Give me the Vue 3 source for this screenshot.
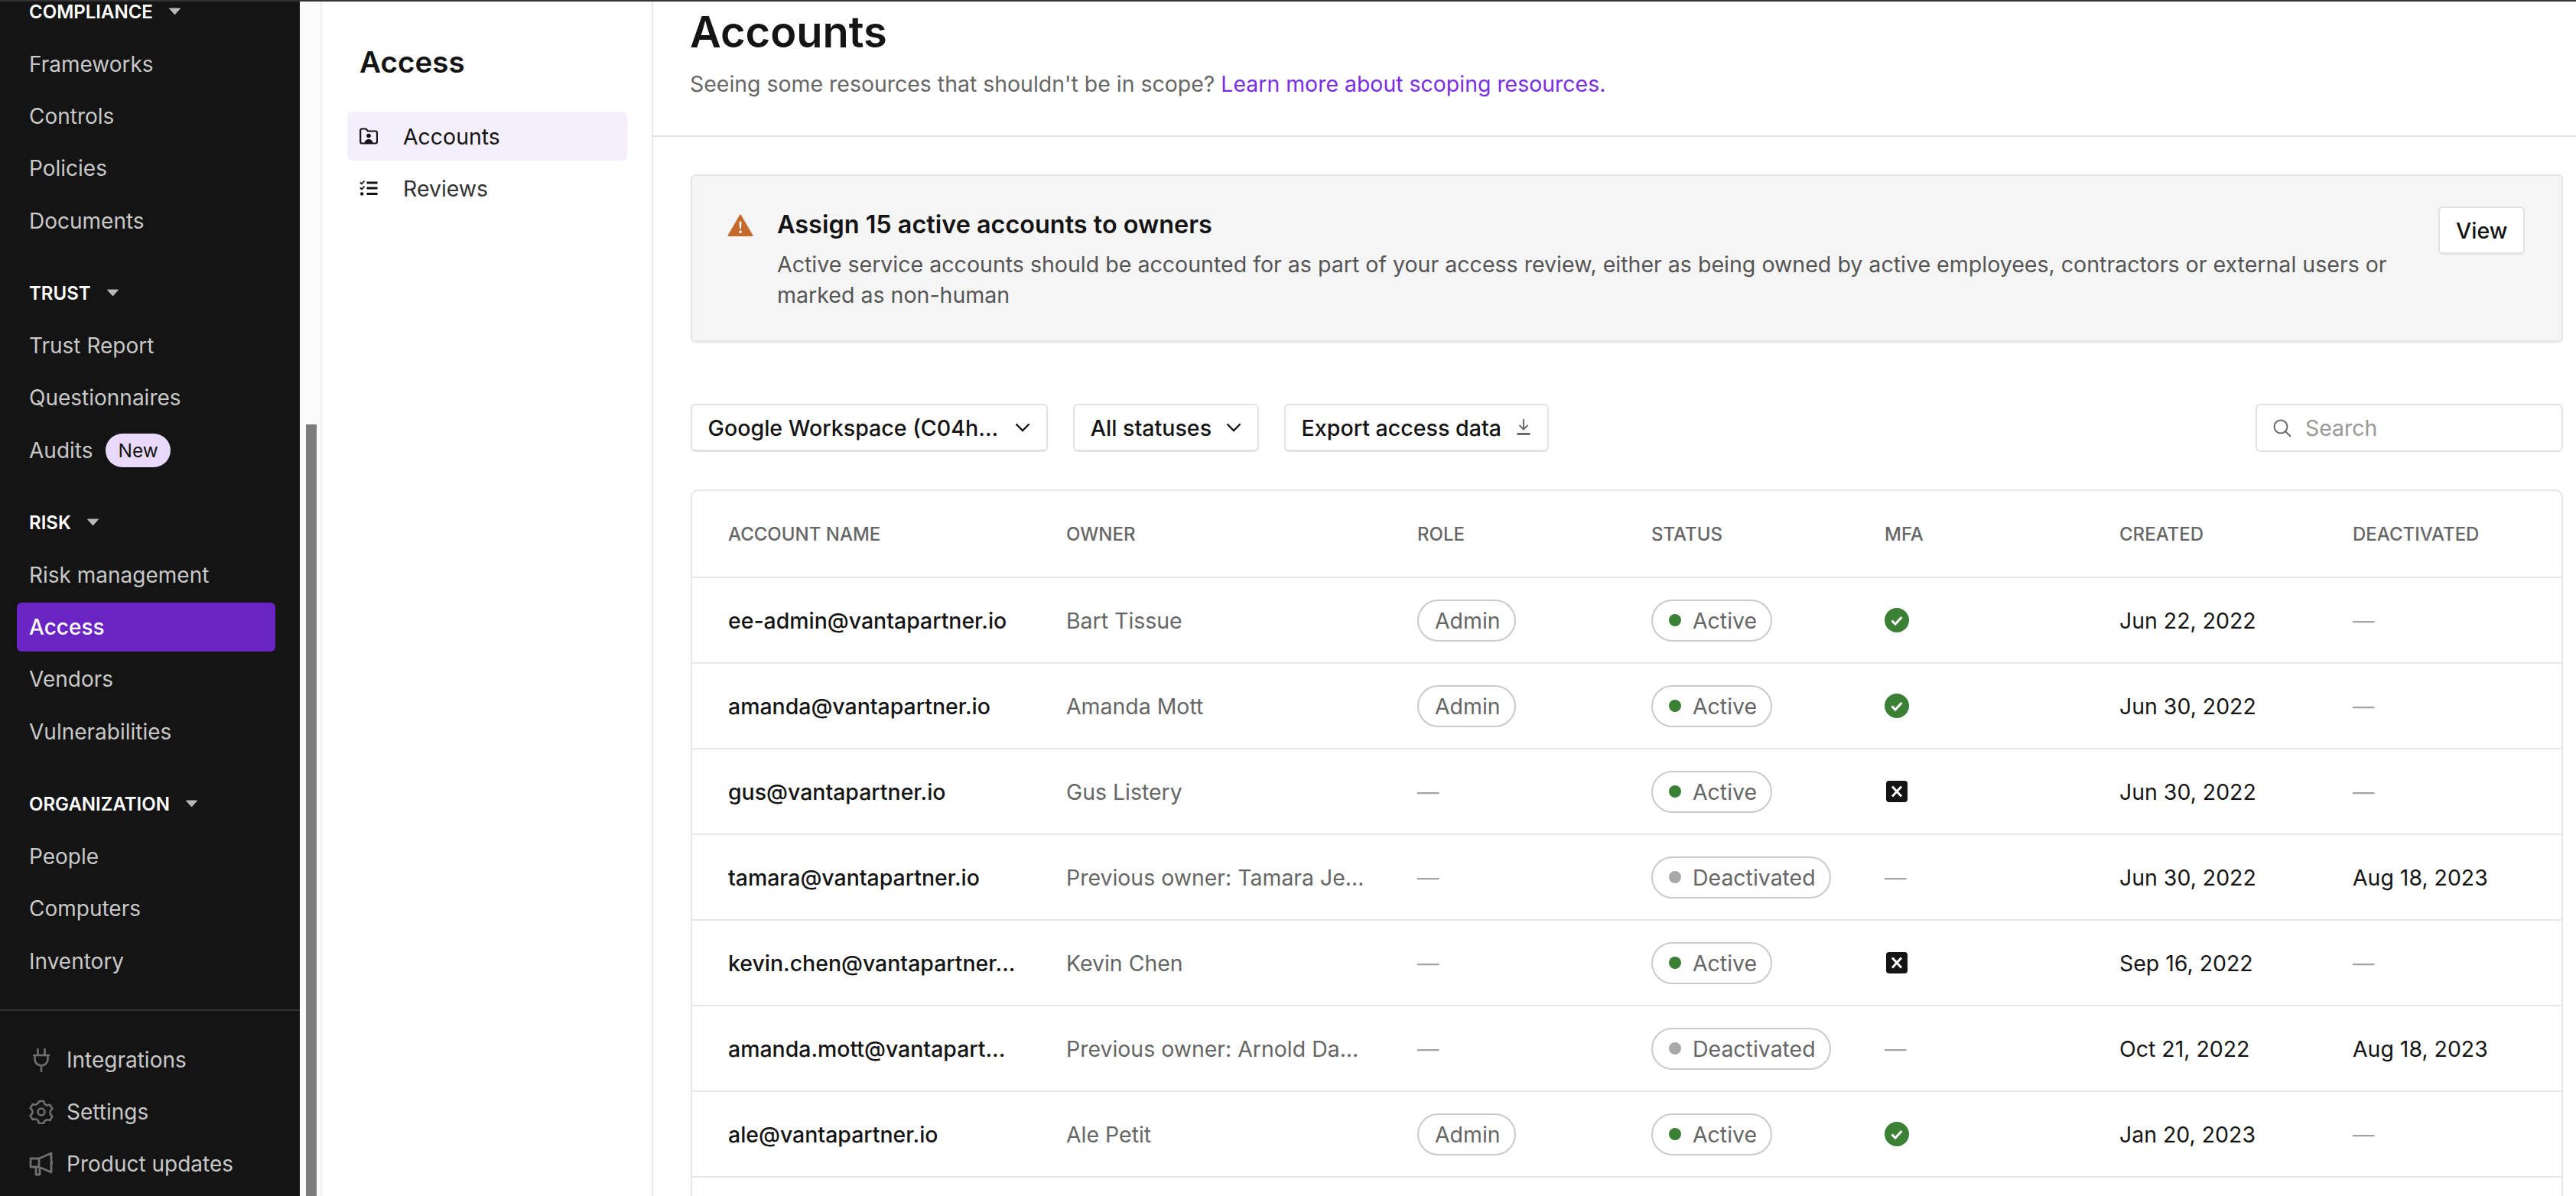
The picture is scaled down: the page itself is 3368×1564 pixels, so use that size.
<template>
  <div class="app">
    <aside class="sidebar">
      <div class="nav-scroll">
        <section class="nav-sec" v-for="s in sections" :key="s.title">
          <div class="nav-head">
            {{ s.title }}
            <svg class="caret" width="17" height="10" viewBox="0 0 17 10"><path d="M1.500 1h14L8.500 9z" fill="#b8b8b8" stroke="#b8b8b8" stroke-linejoin="round" /></svg>
          </div>
          <div class="nav-item" :class="{ active: i.label === 'Access' }" v-for="i in s.items" :key="i.label">
            {{ i.label }}
            <span v-if="i.badge" class="badge">{{ i.badge }}</span>
          </div>
        </section>
      </div>
      <div class="nav-foot">
        <div class="nav-item">
          <svg class="foot-icon" width="32" height="32" viewBox="0 0 32 32" fill="none" stroke="#6f6f6f" stroke-width="2.6"><path d="M11.500 1v8M20.500 1v8M5 10h22M7.500 10v5a8.500 8.500 0 0 0 17 0v-5M16 23.500V32" /></svg>
          Integrations
        </div>
        <div class="nav-item">
          <svg class="foot-icon" width="32" height="32" viewBox="0 0 32 32" fill="none" stroke="#6f6f6f" stroke-width="2.600" stroke-linejoin="round"><circle cx="16" cy="16" r="4.500" /><path d="M13 2h6l1.300 3.800 3.200 1.800 3.900-.8 3 5.200-2.700 3v3.800l2.700 3-3 5.200-3.900-.8-3.200 1.800L19 31h-6l-1.300-3.900-3.200-1.800-3.900.8-3-5.200 2.700-3V14.100l-2.700-3 3-5.200 3.900.8 3.200-1.800z" /></svg>
          Settings
        </div>
        <div class="nav-item">
          <svg class="foot-icon" width="32" height="32" viewBox="0 0 32 32" fill="none" stroke="#6f6f6f" stroke-width="2.800" stroke-linejoin="round"><path d="M29 2 13 9H2v11h11l16 7zM9 20v10h5v-8M13 9v11M29.500 12v5" /></svg>
          Product updates
        </div>
      </div>
    </aside>

    <div class="gutter"><div class="thumb"></div></div>

    <nav class="subnav">
      <h2>Access</h2>
      <div class="sub-item on">
        <svg width="24" height="24" viewBox="0 0 24 24" fill="none"><path d="M1.200 4.500a2 2 0 0 1 2-2h5.300l2.500 3h10a2 2 0 0 1 2 2v12a2 2 0 0 1-2 2H3.200a2 2 0 0 1-2-2z" stroke="#141414" stroke-width="2.200" /><circle cx="12" cy="11.500" r="2.800" fill="#141414" /><path d="M6.500 21c.5-3.500 3-5 5.500-5s5 1.500 5.500 5z" fill="#141414" /></svg>
        Accounts
      </div>
      <div class="sub-item">
        <svg width="24" height="24" viewBox="0 0 24 24" fill="none" stroke="#141414"><path d="M9.500 5h14M9.500 12h14M9.500 19.500h14" stroke-width="2.800" /><path d="M1 4.500 3 6.500 6.500 2.500M1 11.500 3 13.500 6.500 9.500" stroke-width="1.800" /><circle cx="3.200" cy="19.500" r="2.200" fill="#141414" stroke="none" /></svg>
        Reviews
      </div>
    </nav>

    <main class="main">
      <header class="page-head">
        <h1>Accounts</h1>
        <p>Seeing some resources that shouldn't be in scope? <a>Learn more about scoping resources.</a></p>
      </header>
      <div class="body">
        <div class="alert">
          <svg class="warn" width="34" height="29" viewBox="0 0 34 30"><path d="M17 1.500 33 29H1z" fill="#c56a2c" stroke="#c56a2c" stroke-width="2" stroke-linejoin="round" /><path d="M15.500 10h3l-.5 10h-2z" fill="#fff" /><circle cx="17" cy="24" r="1.800" fill="#fff" /></svg>
          <div class="alert-text">
            <h3>Assign 15 active accounts to owners</h3>
            <p>Active service accounts should be accounted for as part of your access review, either as being owned by active employees, contractors or external users or marked as non-human</p>
          </div>
          <button class="btn view">View</button>
        </div>

        <div class="toolbar">
          <button class="btn wide">
            Google Workspace (C04h...
            <svg width="20" height="12" viewBox="0 0 20 12" fill="none" stroke="#141414" stroke-width="2.400"><path d="m1.500 1.500 8.500 8.500 8.500-8.500" /></svg>
          </button>
          <button class="btn">
            All statuses
            <svg width="20" height="12" viewBox="0 0 20 12" fill="none" stroke="#141414" stroke-width="2.400"><path d="m1.500 1.500 8.500 8.500 8.500-8.500" /></svg>
          </button>
          <button class="btn">
            Export access data
            <svg width="20" height="22" viewBox="0 0 20 22" fill="none" stroke="#6a6a6a"><path d="M10 0v13M4.500 8l5.500 5.500L15.500 8" stroke-width="2" /><path d="M1.500 19.500h17" stroke-width="3" /></svg>
          </button>
          <div class="search">
            <svg width="26" height="26" viewBox="0 0 26 26" fill="none" stroke="#6a6a6a" stroke-width="2"><circle cx="11" cy="11" r="8.500" /><path d="m17 17 7 7" /></svg>
            <span>Search</span>
          </div>
        </div>

        <div class="table">
          <div class="row head">
            <div v-for="c in columns" :key="c">{{ c }}</div>
          </div>
          <div class="row" v-for="r in rows" :key="r.name">
            <div class="name">{{ r.name }}</div>
            <div class="owner">{{ r.owner }}</div>
            <div><span v-if="r.role" class="pill">{{ r.role }}</span><span v-else class="dash">—</span></div>
            <div>
              <span class="pill">
                <i class="dot" :class="r.status === 'Active' ? 'green' : 'grey'"></i>{{ r.status }}
              </span>
            </div>
            <div class="mfa">
              <svg v-if="r.mfa === 'yes'" width="32" height="32" viewBox="0 0 32 32"><circle cx="16" cy="16" r="16" fill="#3a8035" /><path d="m9.500 16.500 4.500 4.500 8.500-9" fill="none" stroke="#fff" stroke-width="3" /></svg>
              <svg v-else-if="r.mfa === 'no'" class="mfa-no" width="28" height="28" viewBox="0 0 28 28"><rect width="28" height="28" rx="4" fill="#141414" /><path d="m8 7.500 12 13M20 7.500l-12 13" stroke="#fff" stroke-width="3" /></svg>
              <span v-else class="dash">—</span>
            </div>
            <div class="date">{{ r.created }}</div>
            <div class="date"><template v-if="r.deactivated">{{ r.deactivated }}</template><span v-else class="dash">—</span></div>
          </div>
          <div class="row filler"></div>
        </div>
      </div>
    </main>
  </div>
</template>

<script setup>
const sections = [
  { title: 'COMPLIANCE', items: [{ label: 'Frameworks' }, { label: 'Controls' }, { label: 'Policies' }, { label: 'Documents' }] },
  { title: 'TRUST', items: [{ label: 'Trust Report' }, { label: 'Questionnaires' }, { label: 'Audits', badge: 'New' }] },
  { title: 'RISK', items: [{ label: 'Risk management' }, { label: 'Access' }, { label: 'Vendors' }, { label: 'Vulnerabilities' }] },
  { title: 'ORGANIZATION', items: [{ label: 'People' }, { label: 'Computers' }, { label: 'Inventory' }] },
]
const columns = ['ACCOUNT NAME', 'OWNER', 'ROLE', 'STATUS', 'MFA', 'CREATED', 'DEACTIVATED']
const rows = [
  { name: 'ee-admin@vantapartner.io', owner: 'Bart Tissue', role: 'Admin', status: 'Active', mfa: 'yes', created: 'Jun 22, 2022' },
  { name: 'amanda@vantapartner.io', owner: 'Amanda Mott', role: 'Admin', status: 'Active', mfa: 'yes', created: 'Jun 30, 2022' },
  { name: 'gus@vantapartner.io', owner: 'Gus Listery', status: 'Active', mfa: 'no', created: 'Jun 30, 2022' },
  { name: 'tamara@vantapartner.io', owner: 'Previous owner: Tamara Je...', status: 'Deactivated', created: 'Jun 30, 2022', deactivated: 'Aug 18, 2023' },
  { name: 'kevin.chen@vantapartner...', owner: 'Kevin Chen', status: 'Active', mfa: 'no', created: 'Sep 16, 2022' },
  { name: 'amanda.mott@vantapart...', owner: 'Previous owner: Arnold Da...', status: 'Deactivated', created: 'Oct 21, 2022', deactivated: 'Aug 18, 2023' },
  { name: 'ale@vantapartner.io', owner: 'Ale Petit', role: 'Admin', status: 'Active', mfa: 'yes', created: 'Jan 20, 2023' },
]
</script>

<style>
html, body { margin: 0; overflow: hidden; }
</style>

<style scoped>
.app { display: flex; height: 1564px; box-sizing: border-box; border-top: 2px solid #333; overflow: hidden; font-family: Inter, "Liberation Sans", sans-serif; font-size: 28.450px; color: #141414; background: #fff; }
.sidebar { width: 392px; flex: none; background: #141414; display: flex; flex-direction: column; font-size: 28px; }
.nav-scroll { height: 1318px; flex: none; overflow: hidden; }
.nav-sec { padding-bottom: 23.400px; }
.nav-sec:first-child { margin-top: -22px; }
.nav-head { height: 70px; margin-bottom: 2px; display: flex; align-items: center; gap: 20px; padding-left: 38px; color: #fff; font-size: 24px; font-weight: 600; }
.nav-item { height: 64px; margin: 0 32px 4.200px 22px; padding-left: 16px; display: flex; align-items: center; color: #c8c8c8; border-radius: 6px; white-space: nowrap; }
.nav-item.active { background: #6b24c4; color: #fff; font-weight: 500; }
.badge { margin-left: 17px; height: 44px; padding: 0 16px; border-radius: 22px; background: #e8d9fb; color: #141414; font-size: 24.500px; display: inline-flex; align-items: center; }
.nav-foot { border-top: 2px solid #333; padding-top: 32px; }
.foot-icon { margin-right: 17px; flex: none; }
.gutter { width: 29px; flex: none; box-sizing: border-box; padding-left: 8px; background: #fafafa; border-right: 2px solid #eee; }
.thumb { width: 14px; height: 100%; margin-top: 553px; background: #7c7c7c; }
.subnav { width: 433px; flex: none; box-sizing: border-box; padding: 0 32px 0 33px; border-right: 2px solid #e6e6e6; }
.subnav h2 { margin: 56px 0 42px 16px; font-size: 38.600px; line-height: 46px; font-weight: 600; }
.sub-item { height: 64px; margin-bottom: 4px; padding-left: 16px; display: flex; align-items: center; gap: 33px; border-radius: 6px; color: #333; }
.sub-item.on { background: #f4effb; color: #141414; }
.main { flex: 1; min-width: 0; }
.page-head { height: 177px; box-sizing: border-box; padding: 4px 48px 0; border-bottom: 2px solid #e2e2e2; }
.page-head h1 { margin: 0; font-size: 56px; line-height: 72px; font-weight: 600; }
.page-head p { margin: 10px 0 0; color: #666; line-height: 44px; }
.page-head a { color: #7a2ee0; }
.body { padding: 49px 17px 0 49px; }
.alert { height: 219px; box-sizing: border-box; display: flex; align-items: flex-start; padding: 40px 48px 0 46px; background: #f6f5f6; border: 2px solid #e5e5e5; border-radius: 6px; box-shadow: 0 2px 2px rgba(0, 0, 0, .06); }
.warn { flex: none; margin: 10px 0 0; }
.alert-text { flex: 1; margin: 0 48px 0 31px; }
.alert-text h3 { margin: 2px 0 10px; font-size: 32.400px; line-height: 44px; font-weight: 600; }
.alert-text p { margin: 0; font-size: 28.550px; color: #555; line-height: 40px; }
.btn { height: 63px; box-sizing: border-box; padding: 0 20.500px; display: inline-flex; align-items: center; gap: 19px; background: #fff; border: 2px solid #e2e2e2; border-bottom-width: 3px; border-radius: 6px; font-family: inherit; font-size: 28.600px; font-weight: 500; color: #141414; white-space: nowrap; }
.wide { gap: 22px; }
.view { flex: none; }
.toolbar { margin-top: 81px; display: flex; align-items: center; gap: 33.500px; }
.search { margin-left: auto; width: 402px; height: 63px; box-sizing: border-box; padding-left: 20px; display: flex; align-items: center; gap: 17px; border: 2px solid #e2e2e2; border-radius: 6px; color: #999; }
.table { margin-top: 49px; border: 2px solid #e6e6e6; border-radius: 10px 10px 0 0; }
.row { height: 112px; box-sizing: border-box; padding-left: 47px; display: grid; grid-template-columns: 442px 459px 306px 305px 307px 305px 1fr; align-items: center; border-bottom: 2px solid #e6e6e6; color: #666; white-space: nowrap; }
.row.head { height: 114px; font-size: 24px; font-weight: 500; color: #666; }
.name { color: #141414; font-weight: 500; }
.date { color: #141414; }
.dash { color: #a3a3a3; }
.pill { display: inline-flex; align-items: center; height: 55px; box-sizing: border-box; padding: 0 18px 0 21px; border: 2px solid #cacaca; border-radius: 28px; color: #666; vertical-align: middle; }
.dot { width: 16px; height: 16px; border-radius: 50%; margin-right: 15px; }
.green { background: #3a8035; }
.grey { background: #a8a8a8; }
.mfa { display: flex; align-items: center; }
.mfa-no { margin-left: 2px; }
</style>
